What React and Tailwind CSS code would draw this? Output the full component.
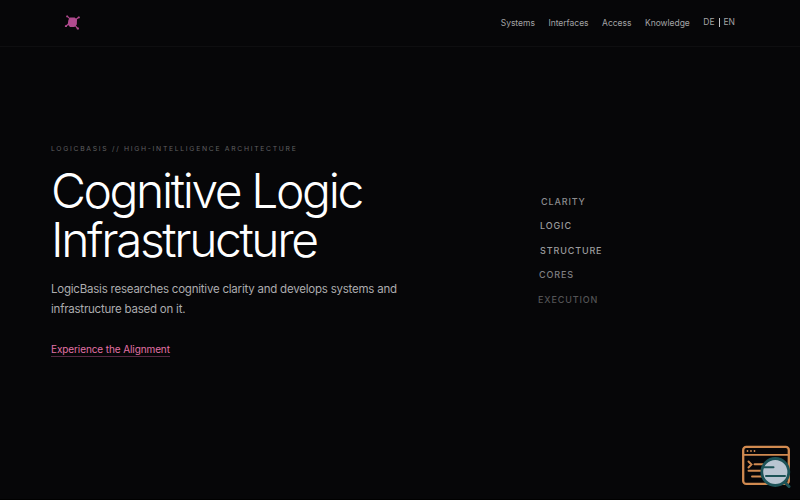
import React from "react";

const navLinks = ["Systems", "Interfaces", "Access", "Knowledge"];

const words = [
  { text: "CLARITY", style: "ml-[3px] text-[#8c8c8e]" },
  { text: "LOGIC", style: "ml-[2px] text-[#9b9b9d]" },
  { text: "STRUCTURE", style: "ml-[2px] text-[#9b9b9d]" },
  { text: "CORES", style: "ml-[1px] text-[#7f7f81]" },
  { text: "EXECUTION", style: "text-[#545456]" },
];

const Logo = () => (
  <svg width="17" height="17" viewBox="0 0 17 17" fill="#b04a8e" stroke="#b04a8e">
    <path d="M3.2 2.2l3 3M14.8 3.2l-4 3M2 12l4-3M13.8 14.8l-3-4" strokeWidth="1.2" />
    <path d="M6 3.6l4.7-.2L13 5.6l-.2 4.8-2.4 2.6-4.4.1L3.7 10.5 4.4 6z" stroke="none" />
    <g stroke="none">
      <rect x="2.2" y="1.4" width="1.9" height="1.9" rx=".5" />
      <rect x="13.8" y="2.4" width="2" height="1.8" rx=".5" />
      <rect x="0.9" y="11.2" width="2.1" height="1.8" rx=".5" />
      <rect x="12.8" y="13.6" width="2.1" height="1.9" rx=".5" />
    </g>
  </svg>
);

const Badge = () => (
  <svg width="50" height="44" viewBox="0 0 50 44" fill="none" strokeLinecap="round">
    <rect x="2.2" y="1.9" width="45.6" height="37" rx="3" stroke="#d18a50" strokeWidth="2.3" />
    <path d="M3 9.8h44" stroke="#d18a50" strokeWidth="1.8" />
    <g fill="#d18a50">
      <circle cx="6.5" cy="6" r=".9" />
      <circle cx="10" cy="6" r=".9" />
      <circle cx="13.5" cy="6" r=".9" />
    </g>
    <path d="M7.5 16.5l3 3-3 3M13.5 19.3h10M7.5 25.7h14M11 31.5h11" stroke="#d18a50" strokeWidth="1.9" />
    <path d="M44 37.5l4 4" stroke="#1d5358" strokeWidth="3" />
    <circle cx="34.3" cy="27" r="13.5" fill="#b9c5d2" stroke="#1d5358" strokeWidth="2.8" />
    <path d="M23 22.3h9.5M25 31h19" stroke="#1d5358" strokeWidth="2" />
  </svg>
);

const Header = () => (
  <header className="flex h-[47px] items-center justify-between border-b border-[#0e0e10] pr-[65px] pl-16">
    <div className="pb-[2px]">
      <Logo />
    </div>
    <nav className="flex items-center gap-[13.5px] text-[8.5px] leading-3 tracking-[-0.02px] text-[#a3a3a5]">
      {navLinks.map((name) => (
        <a key={name} href="#">
          {name}
        </a>
      ))}
      <div className="flex items-center gap-1 pb-[2px]">
        <span>DE</span>
        <span className="h-[9px] w-px bg-[#c4c4c6]" />
        <span>EN</span>
      </div>
    </nav>
  </header>
);

const App = () => {
  return (
    <div className="relative flex h-[500px] w-[800px] flex-col overflow-hidden border-b border-black bg-[#060608] font-['Inter',sans-serif]">
      <Header />

      <main className="flex flex-1 pl-[51px]">
        <section className="w-[487px] pt-[96px]">
          <p className="text-[6.8px] leading-3 tracking-[1.7px] text-[#606062]">
            LOGICBASIS // HIGH-INTELLIGENCE ARCHITECTURE
          </p>
          <h1 className="mt-[11px] text-[48px] leading-[49px] font-light tracking-[-2.4px] text-white">
            Cognitive Logic
            <br />
            Infrastructure
          </h1>
          <p className="mt-[15px] text-[11.5px] leading-5 tracking-[-0.22px] text-[#acacae]">
            LogicBasis researches cognitive clarity and develops systems and
            <br />
            infrastructure based on it.
          </p>
          <a
            href="#"
            className="mt-[23px] inline-block border-b border-[#552943] text-[10px] leading-[14px] tracking-[-0.1px] text-[#e272a6]"
          >
            Experience the Alignment
          </a>
        </section>

        <ul className="flex flex-col gap-[12.4px] pt-[149px] text-[9px] leading-3 font-medium tracking-[0.87px]">
          {words.map(({ text, style }) => (
            <li key={text} className={style}>
              {text}
            </li>
          ))}
        </ul>
      </main>

      {/* Floating code inspector badge */}
      <div className="absolute right-[9px] bottom-[10px]">
        <Badge />
      </div>
    </div>
  );
};

export default App;
